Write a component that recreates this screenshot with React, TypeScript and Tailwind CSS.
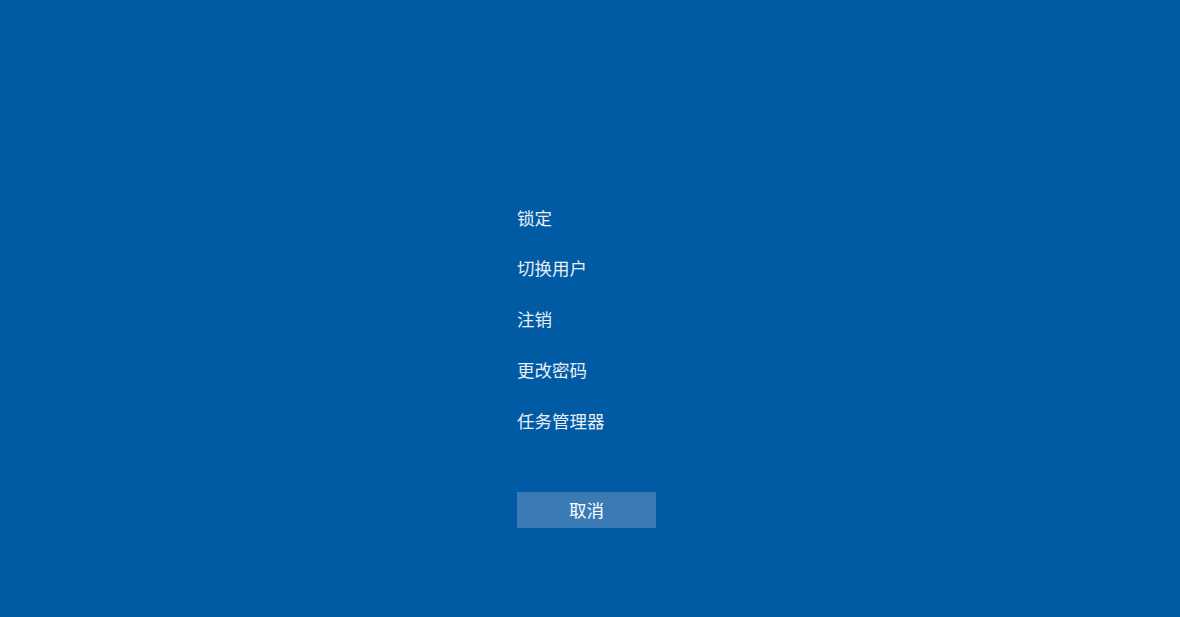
import React from "react";

const options = ["锁定", "切换用户", "注销", "更改密码", "任务管理器"];

const App = () => {
  return (
    <div
      className="w-full h-[617px] bg-[#015aa4] overflow-hidden flex justify-center"
      style={{ fontFamily: '"Noto Sans CJK SC", "Noto Sans", sans-serif' }}
    >
      <div className="w-[146px] pt-[192px] flex flex-col">
        {options.map((label) => (
          <div
            key={label}
            className="h-[50.75px] flex items-center text-[17.5px] text-[#e8eff7] leading-none"
          >
            {label}
          </div>
        ))}
        <button className="mt-[46px] w-[139px] h-[36px] bg-[#3a7bb6] text-white text-[17.5px] leading-none flex items-center justify-center">
          取消
        </button>
      </div>
    </div>
  );
};

export default App;
